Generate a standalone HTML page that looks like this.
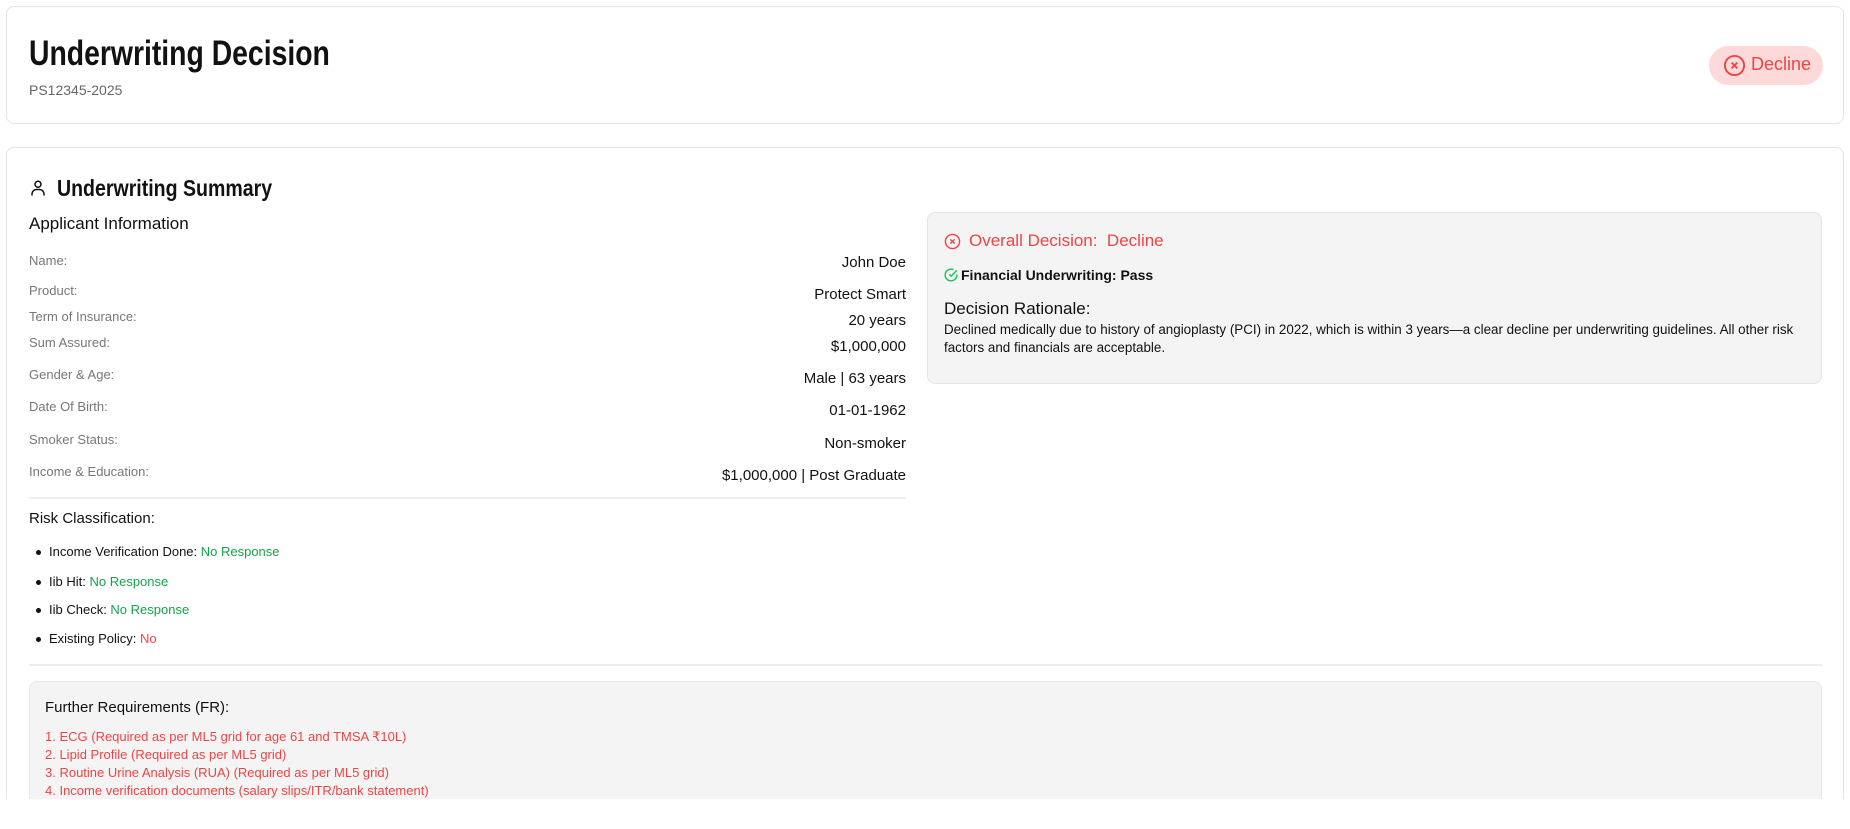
<!DOCTYPE html>
<html><head><meta charset="utf-8"><style>
*{box-sizing:border-box;margin:0;padding:0}
body{width:1850px;height:829px;background:#fff;font-family:"Liberation Sans",sans-serif;color:#111;position:relative;overflow:hidden}
.abs{position:absolute;white-space:nowrap}
.card{position:absolute;border:1px solid #e5e5e5;border-radius:8px;background:#fff}
.cond{font-weight:bold;transform-origin:0 0}
.lbl{position:absolute;left:29px;font-size:13px;color:#777}
.val{position:absolute;right:944px;font-size:15px;color:#111}
.li{position:absolute;left:49px;font-size:13px;color:#111}
.li:before{content:"";position:absolute;left:-13px;top:6px;width:5px;height:5px;border-radius:50%;background:#111}
.g{color:#16a34a}.r{color:#ef4444}
.fr{position:absolute;left:45px;font-size:13px;color:#ef4444}
</style></head><body>
<div class="card" style="left:6px;top:6px;width:1838px;height:118px"></div>
<div class="abs cond" style="left:29px;top:34px;font-size:35px;transform:scaleX(0.81)">Underwriting Decision</div>
<div class="abs" style="left:29px;top:82px;font-size:14px;color:#666">PS12345-2025</div>
<div class="abs" style="left:1709px;top:46px;width:114px;height:39px;border-radius:20px;background:#fdd9d9"></div>
<svg class="abs" style="left:1723px;top:54px" width="23" height="23" viewBox="0 0 24 24" fill="none" stroke="#ef4444" stroke-width="2"><circle cx="12" cy="12" r="10"/><path d="M9 9l6 6M15 9l-6 6"/></svg>
<div class="abs" style="left:1751px;top:54px;font-size:18px;color:#ef4444">Decline</div>

<div style="position:absolute;left:0;top:0;width:1850px;height:799px;overflow:hidden">
<div class="card" style="left:6px;top:147px;width:1838px;height:652px;border-bottom:none;border-radius:8px 8px 0 0"></div>
<svg class="abs" style="left:29px;top:179px" width="18" height="18" viewBox="0 0 24 24" fill="none" stroke="#111" stroke-width="2"><circle cx="12" cy="7" r="4"/><path d="M4 22v-2a6 6 0 0 1 6-6h4a6 6 0 0 1 6 6v2"/></svg>
<div class="abs cond" style="left:57px;top:175px;font-size:23px;transform:scaleX(0.85)">Underwriting Summary</div>
<div class="abs" style="left:29px;top:214px;font-size:17px">Applicant Information</div>
<div class="lbl" style="top:253px">Name:</div><div class="val" style="top:254px">John Doe</div>
<div class="lbl" style="top:283px">Product:</div><div class="val" style="top:286px">Protect Smart</div>
<div class="lbl" style="top:309px">Term of Insurance:</div><div class="val" style="top:312px">20 years</div>
<div class="lbl" style="top:335px">Sum Assured:</div><div class="val" style="top:338px">$1,000,000</div>
<div class="lbl" style="top:367px">Gender &amp; Age:</div><div class="val" style="top:370px">Male | 63 years</div>
<div class="lbl" style="top:399px">Date Of Birth:</div><div class="val" style="top:402px">01-01-1962</div>
<div class="lbl" style="top:432px">Smoker Status:</div><div class="val" style="top:435px">Non-smoker</div>
<div class="lbl" style="top:464px">Income &amp; Education:</div><div class="val" style="top:467px">$1,000,000 | Post Graduate</div>
<div class="abs" style="left:29px;top:497px;width:877px;height:2px;background:#eee"></div>
<div class="abs" style="left:29px;top:510px;font-size:15px">Risk Classification:</div>
<div class="li" style="top:544px">Income Verification Done: <span class="g">No Response</span></div>
<div class="li" style="top:574px">Iib Hit: <span class="g">No Response</span></div>
<div class="li" style="top:602px">Iib Check: <span class="g">No Response</span></div>
<div class="li" style="top:631px">Existing Policy: <span class="r">No</span></div>
<div class="abs" style="left:29px;top:664px;width:1793px;height:2px;background:#eee"></div>
<div class="abs" style="left:29px;top:681px;width:1793px;height:118px;background:#f4f4f4;border:1px solid #e8e8e8;border-bottom:none;border-radius:8px 8px 0 0"></div>
<div class="abs" style="left:45px;top:699px;font-size:15px">Further Requirements (FR):</div>
<div class="fr" style="top:729px">1. ECG (Required as per ML5 grid for age 61 and TMSA ₹10L)</div>
<div class="fr" style="top:747px">2. Lipid Profile (Required as per ML5 grid)</div>
<div class="fr" style="top:765px">3. Routine Urine Analysis (RUA) (Required as per ML5 grid)</div>
<div class="fr" style="top:783px">4. Income verification documents (salary slips/ITR/bank statement)</div>

<div class="abs" style="left:927px;top:212px;width:895px;height:172px;background:#f4f4f4;border:1px solid #e5e5e5;border-radius:8px"></div>
<svg class="abs" style="left:944px;top:233px" width="17" height="17" viewBox="0 0 24 24" fill="none" stroke="#ef4444" stroke-width="2"><circle cx="12" cy="12" r="10"/><path d="M9 9l6 6M15 9l-6 6"/></svg>
<div class="abs" style="left:969px;top:231px;font-size:17px;color:#ef4444">Overall Decision:&nbsp; Decline</div>
<svg class="abs" style="left:944px;top:268px" width="14" height="14" viewBox="0 0 24 24" fill="none" stroke="#22c55e" stroke-width="2.5"><path d="M22 11.1V12a10 10 0 1 1-5.9-9.1"/><path d="M22 4L12 14l-3-3"/></svg>
<div class="abs" style="left:961px;top:267px;font-size:14px;font-weight:bold">Financial Underwriting: Pass</div>
<div class="abs" style="left:944px;top:299px;font-size:17px">Decision Rationale:</div>
<div class="abs" style="left:944px;top:321px;font-size:13.4px;line-height:18px;width:870px;white-space:normal">Declined medically due to history of angioplasty (PCI) in 2022, which is within 3 years—a clear decline per underwriting guidelines. All other risk factors and financials are acceptable.</div>
</div>
</body></html>
